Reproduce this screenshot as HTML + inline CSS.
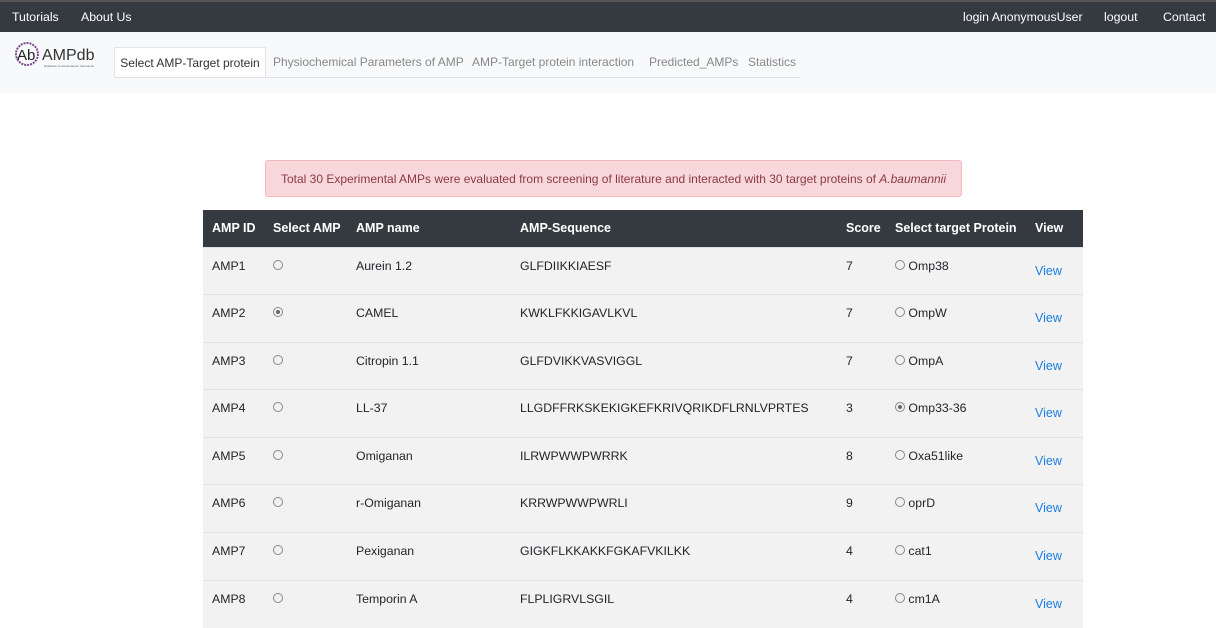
<!DOCTYPE html>
<html><head><style>
*{box-sizing:border-box;margin:0;padding:0}
body{width:1216px;height:610px;overflow:hidden;font-family:"Liberation Sans",sans-serif;font-size:13px;color:#212529;background:#fff;position:relative}
.top{position:absolute;top:0;left:0;width:1216px;height:32px;background:#343a40;border-top:2px solid #555;color:#fff;font-size:12.3px}
.top span{position:absolute;top:8px}
.sub{position:absolute;top:32px;left:0;width:1216px;height:61px;background:#f8f9fa}
.tab{position:absolute;top:15px;height:31px;line-height:31px;color:#888;font-size:12px;white-space:nowrap}
.tab.a{background:#fff;color:#333;border:1px solid #e5e5e5;border-bottom:none;left:114px;width:152px;text-align:center}
.tabline{position:absolute;left:114px;top:45px;width:686px;height:1px;background:#dee2e6}
.alert{position:absolute;left:265px;top:160px;width:697px;height:37px;background:#f8d7da;border:1px solid #f1b8be;color:#8a3a45;font-size:12px;line-height:36px;text-align:center;border-radius:3px}
table{position:absolute;left:203px;top:210px;width:880px;border-collapse:collapse}
th{background:#343a40;color:#fff;font-weight:bold;text-align:left;height:37px;font-size:12.5px;padding:0}
td{background:#f2f2f2;height:47.6px;border-top:1px solid #dde2e6;font-size:12.3px;padding:0;vertical-align:top;padding-top:11px}
.r{display:inline-block;width:10px;height:10px;border:1px solid #888;border-radius:50%;position:relative;top:0px}
.r.c::after{content:"";position:absolute;left:2px;top:2px;width:4px;height:4px;border-radius:50%;background:#666}
a{color:#1a7ee0;text-decoration:none;position:relative;top:5px;font-size:12.5px}
</style></head><body>
<div class="top"><span style="left:12px">Tutorials</span><span style="left:81px">About Us</span><span style="left:963px">login AnonymousUser</span><span style="left:1104px">logout</span><span style="left:1163px">Contact</span></div>
<div class="sub">
<svg style="position:absolute;left:14px;top:8px" width="88" height="32"><circle cx="13" cy="14" r="11" fill="none" stroke="#7a4a8a" stroke-width="2" stroke-dasharray="2 1"/><text x="3" y="20" font-family="Liberation Sans" font-size="15" fill="#222">Ab</text><text x="28" y="20" font-family="Liberation Sans" font-size="16" fill="#333">AMPdb</text><text x="30" y="27" font-size="3" fill="#666">Database of Acinetobacter baumannii</text></svg>
<div class="tab a">Select AMP-Target protein</div>
<div class="tab" style="left:273px">Physiochemical Parameters of AMP</div>
<div class="tab" style="left:472px">AMP-Target protein interaction</div>
<div class="tab" style="left:649px">Predicted_AMPs</div>
<div class="tab" style="left:748px">Statistics</div>
<div class="tabline"></div>
</div>
<div class="alert">Total 30 Experimental AMPs were evaluated from screening of literature and interacted with 30 target proteins of <i>A.baumannii</i></div>
<table>
<colgroup><col style="width:70px"><col style="width:83px"><col style="width:164px"><col style="width:326px"><col style="width:49px"><col style="width:140px"><col></colgroup>
<tr><th style="padding-left:9px">AMP ID</th><th>Select AMP</th><th>AMP name</th><th>AMP-Sequence</th><th>Score</th><th>Select target Protein</th><th>View</th></tr>
<tr><td style="padding-left:9px">AMP1</td><td><span class="r"></span></td><td>Aurein 1.2</td><td>GLFDIIKKIAESF</td><td>7</td><td><span class="r"></span> Omp38</td><td><a>View</a></td></tr>
<tr><td style="padding-left:9px">AMP2</td><td><span class="r c"></span></td><td>CAMEL</td><td>KWKLFKKIGAVLKVL</td><td>7</td><td><span class="r"></span> OmpW</td><td><a>View</a></td></tr>
<tr><td style="padding-left:9px">AMP3</td><td><span class="r"></span></td><td>Citropin 1.1</td><td>GLFDVIKKVASVIGGL</td><td>7</td><td><span class="r"></span> OmpA</td><td><a>View</a></td></tr>
<tr><td style="padding-left:9px">AMP4</td><td><span class="r"></span></td><td>LL-37</td><td>LLGDFFRKSKEKIGKEFKRIVQRIKDFLRNLVPRTES</td><td>3</td><td><span class="r c"></span> Omp33-36</td><td><a>View</a></td></tr>
<tr><td style="padding-left:9px">AMP5</td><td><span class="r"></span></td><td>Omiganan</td><td>ILRWPWWPWRRK</td><td>8</td><td><span class="r"></span> Oxa51like</td><td><a>View</a></td></tr>
<tr><td style="padding-left:9px">AMP6</td><td><span class="r"></span></td><td>r-Omiganan</td><td>KRRWPWWPWRLI</td><td>9</td><td><span class="r"></span> oprD</td><td><a>View</a></td></tr>
<tr><td style="padding-left:9px">AMP7</td><td><span class="r"></span></td><td>Pexiganan</td><td>GIGKFLKKAKKFGKAFVKILKK</td><td>4</td><td><span class="r"></span> cat1</td><td><a>View</a></td></tr>
<tr><td style="padding-left:9px">AMP8</td><td><span class="r"></span></td><td>Temporin A</td><td>FLPLIGRVLSGIL</td><td>4</td><td><span class="r"></span> cm1A</td><td><a>View</a></td></tr>
</table>
</body></html>
